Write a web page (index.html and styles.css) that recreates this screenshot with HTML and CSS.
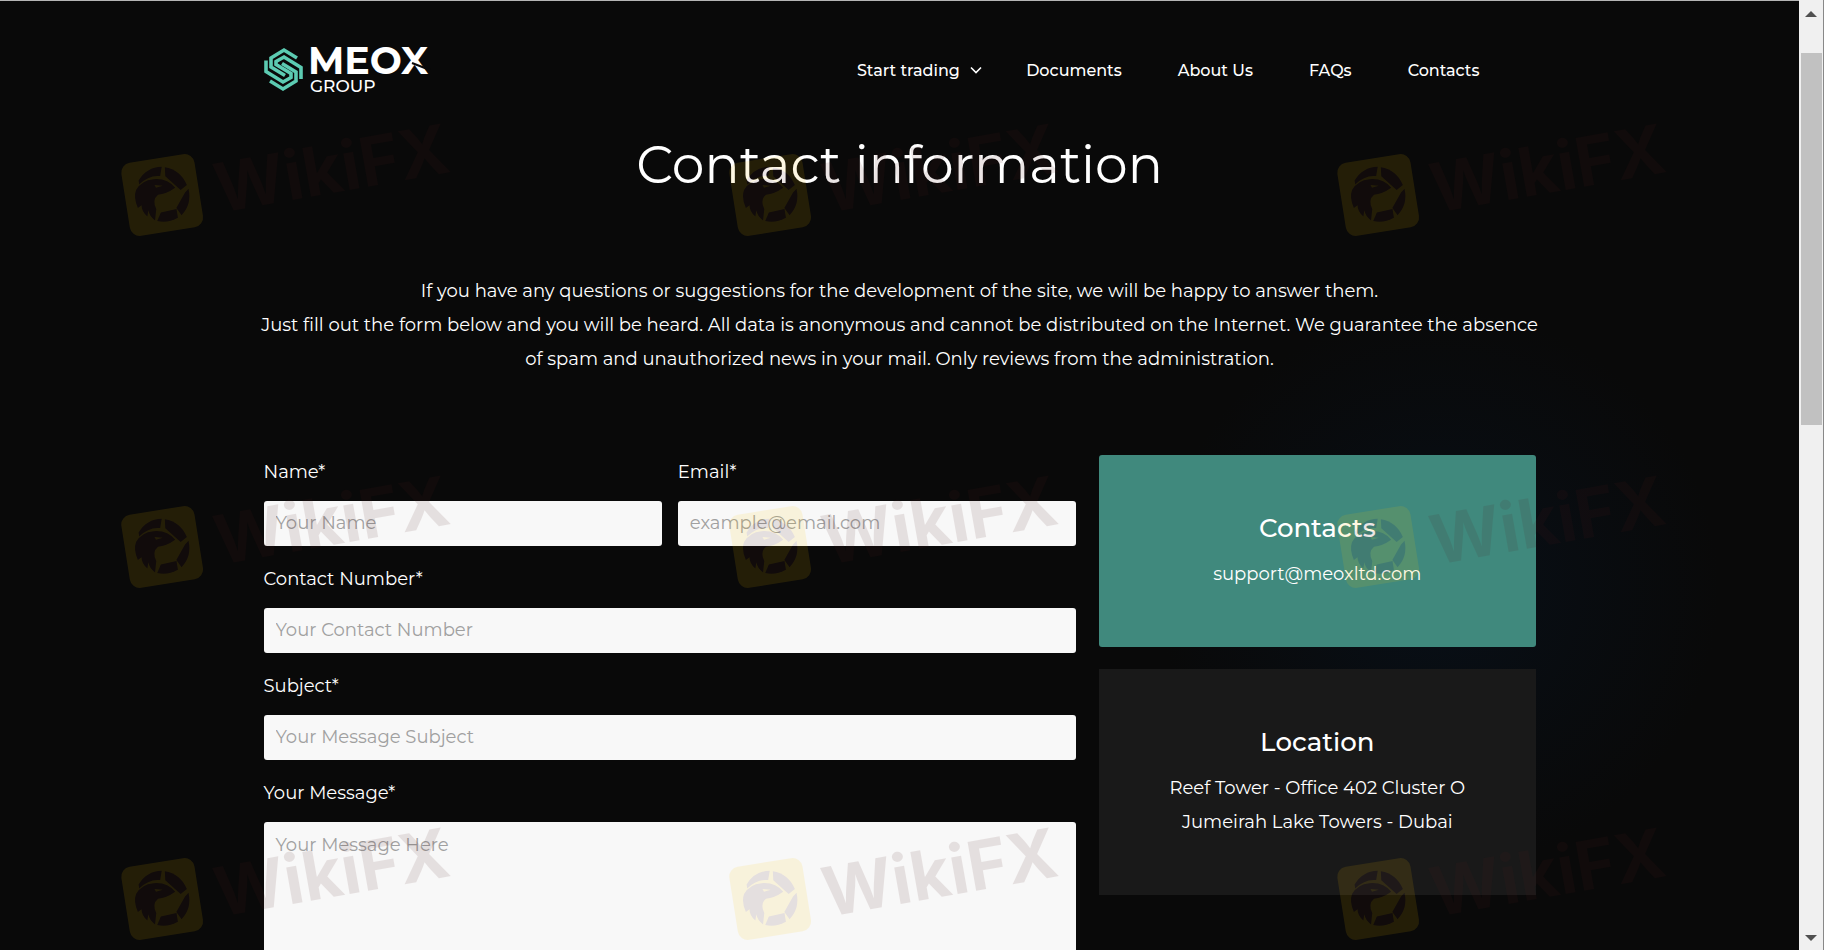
FILE: index.html
```html
<!DOCTYPE html>
<html lang="en">
<head>
  <meta charset="UTF-8" />
  <meta name="viewport" content="width=device-width, initial-scale=1" />
  <title>Contact information - MEOX Group</title>
  <link rel="stylesheet" href="styles.css">
</head>
<body>

  <div class="page">
    <div class="container">
      <header class="header">
        <a href="#" class="logo" aria-label="MEOX Group">
          <svg width="168" height="48" viewBox="0 0 168 48">
            <g fill="none" stroke="#5ccbb2" stroke-width="3.6">
              <path d="M2 14.5 V25.5 L19 36 L27 31.5 V27.5 L12 18.5 V15.5 L20 11 L37 21.5 V33" />
              <path d="M33 12 L20 4 L7 12 V21 L21 29.5" />
              <path d="M6 35 L19 43 L32 35 V26 L18 17.5" />
            </g>
            <text class="logo-name" x="44" y="28">MEOX</text>
            <text class="logo-sub" x="46" y="46">GROUP</text>
            <path d="M148 17 L166 24" stroke="#090909" stroke-width="2" />
          </svg>
        </a>
        <nav class="nav">
          <a href="#">Start trading
            <svg class="chevron" width="12" height="8" viewBox="0 0 12 8"><path d="M1 1.5 L6 6.5 L11 1.5" fill="none" stroke="#fff" stroke-width="1.6" /></svg>
          </a>
          <a href="#">Documents</a>
          <a href="#">About Us</a>
          <a href="#">FAQs</a>
          <a href="#">Contacts</a>
        </nav>
      </header>

      <h1>Contact information</h1>

      <p class="intro">
        If you have any questions or suggestions for the development of the site, we will be happy to answer them.<br />
        Just fill out the form below and you will be heard. All data is anonymous and cannot be distributed on the Internet. We guarantee the absence<br />
        of spam and unauthorized news in your mail. Only reviews from the administration.
      </p>

      <div class="columns">
        <form class="contact-form">
          <div class="row">
            <div class="field">
              <label for="name">Name*</label>
              <input type="text" id="name" placeholder="Your Name" required />
            </div>
            <div class="field">
              <label for="email">Email*</label>
              <input type="email" id="email" placeholder="example@email.com" required />
            </div>
          </div>
          <div class="field">
            <label for="phone">Contact Number*</label>
            <input type="tel" id="phone" placeholder="Your Contact Number" required />
          </div>
          <div class="field">
            <label for="subject">Subject*</label>
            <input type="text" id="subject" placeholder="Your Message Subject" required />
          </div>
          <div class="field">
            <label for="message">Your Message*</label>
            <textarea id="message" placeholder="Your Message Here" required></textarea>
          </div>
        </form>

        <aside class="cards">
          <div class="card card-contacts">
            <h2>Contacts</h2>
            <p><a href="mailto:support@meoxltd.com">support@meoxltd.com</a></p>
          </div>
          <div class="card card-location">
            <h2>Location</h2>
            <p>Reef Tower - Office 402 Cluster O<br />Jumeirah Lake Towers - Dubai</p>
          </div>
        </aside>
      </div>
    </div>

    <!-- Watermark tiles -->
    <svg class="defs" width="0" height="0">
      <symbol id="mark" viewBox="0 0 340 124" overflow="visible">
        <g transform="rotate(-9 42 74)">
          <rect x="5" y="38" width="74" height="74" rx="10" fill="#ffc800" />
          <g fill="#501c1c">
            <path d="M21 57 Q31 45 46 47 L43 56 Q32 53 21 61 Z" />
            <path d="M49 48 Q64 53 68 69 L61 73 L48 57 Z" />
            <path d="M69 73 Q70 89 58 98 L54 90 L65 76 Z" />
            <path d="M54 100 Q43 104 33 100 L38 92 L54 91 Z" />
            <path d="M17 66 Q24 57 36 58 Q50 59 56 70 Q46 75 38 74 Q31 78 34 88 L31 99 Q26 94 26 88 L24 94 Q19 88 20 82 L16 84 Q13 73 17 66 Z" />
            <path d="M36 64 L44 66 L37 67 Z" fill="#ffc800" />
          </g>
        </g>
        <text class="mark-text" x="99" y="93" transform="rotate(-10 99 93)">WikiFX</text>
      </symbol>
    </svg>
    <div class="watermarks" aria-hidden="true">
      <svg><use href="#mark" /></svg>
      <svg><use href="#mark" /></svg>
      <svg><use href="#mark" /></svg>
      <svg><use href="#mark" /></svg>
      <svg><use href="#mark" /></svg>
      <svg><use href="#mark" /></svg>
      <svg><use href="#mark" /></svg>
      <svg><use href="#mark" /></svg>
      <svg><use href="#mark" /></svg>
    </div>
  </div>

  <div class="scrollbar" aria-hidden="true">
    <svg width="12" height="6" viewBox="0 0 12 6"><path d="M0 6 L6 0 L12 6 Z" fill="#505050" /></svg>
    <div class="track"><div class="thumb"></div></div>
    <svg width="12" height="6" viewBox="0 0 12 6"><path d="M0 0 L6 6 L12 0 Z" fill="#505050" /></svg>
  </div>

</body>
</html>
```
FILE: styles.css
```css
* {
  box-sizing: border-box;
}
body {
  margin: 0;
  display: flex;
  height: 100vh;
  overflow: hidden;
  background: #090909;
  color: #fff;
  font-family: Montserrat, Inter, sans-serif;
  font-size: 18px;
  line-height: 34px;
}
a {
  color: inherit;
  text-decoration: none;
}
.page {
  position: relative;
  flex: 1;
  overflow: hidden;
  border-top: 1px solid #b5b5b5;
  background: radial-gradient(circle at 80% 62%, #080f17 0, #090909 280px);
}
.container {
  max-width: 1320px;
  margin: 0 auto;
  padding: 0 24px;
}

/* Header */
.header {
  display: flex;
  align-items: center;
  justify-content: space-between;
  height: 138px;
}
.logo svg {
  display: block;
  overflow: visible;
}
.logo-name {
  font-size: 38px;
  font-weight: 700;
  fill: #fff;
}
.logo-sub {
  font-size: 17px;
  font-weight: 500;
  fill: #fff;
}
.nav {
  display: flex;
  gap: 56px;
  margin-right: 56px;
  padding-top: 2px;
  font-size: 16px;
  font-weight: 500;
}
.chevron {
  margin-left: 6px;
  margin-right: -12px;
  vertical-align: 2px;
}

h1 {
  margin: 0 0 84px;
  font-size: 52px;
  font-weight: 400;
  line-height: 51px;
  text-align: center;
}
.intro {
  margin: 0 -24px 79px;
  text-align: center;
}

/* Form and cards */
.columns {
  display: grid;
  grid-template-columns: 812fr 436fr;
  gap: 23px;
  align-items: start;
}
.contact-form {
  display: flex;
  flex-direction: column;
  gap: 16px;
}
.row {
  display: grid;
  grid-template-columns: 1fr 1fr;
  gap: 16px;
}
.field {
  display: flex;
  flex-direction: column;
  gap: 12px;
}
input,
textarea {
  width: 100%;
  height: 45px;
  padding: 0 12px 2px;
  border: 0;
  border-radius: 3px;
  background: #f8f8f8;
  color: #222;
  font-family: inherit;
  font-size: 18px;
}
textarea {
  height: 200px;
  padding: 12px;
  line-height: 22px;
  resize: none;
}
::placeholder {
  color: #a0a0a0;
}
.cards {
  display: flex;
  flex-direction: column;
  gap: 22px;
}
.card {
  padding: 56px 24px;
  border-radius: 3px;
  text-align: center;
}
.card h2 {
  margin: 0 0 12px;
  font-size: 26px;
  font-weight: 500;
  line-height: 34px;
}
.card p {
  margin: 0;
}
.card-contacts {
  background: #40897d;
}
.card-location {
  border-radius: 0;
  background: #191919;
}

/* Watermark, lies over the whole page */
.watermarks {
  position: absolute;
  inset: 0;
  display: grid;
  grid-template-columns: repeat(3, 608px);
  grid-auto-rows: 352px;
  padding: 119px 0 0 120px;
  opacity: 0.11;
  pointer-events: none;
}
.watermarks svg {
  width: 340px;
  height: 124px;
  overflow: visible;
}
.defs {
  position: absolute;
}
.mark-text {
  font-family: Inter, sans-serif;
  font-size: 68px;
  font-weight: 700;
  fill: #501c1c;
}

/* Scrollbar */
.scrollbar {
  display: flex;
  flex-direction: column;
  align-items: center;
  gap: 36px;
  width: 25px;
  padding: 11px 0 9px;
  border-right: 1px solid #888;
  background: #f0f0f0;
}
.track {
  flex: 1;
  width: 21px;
}
.thumb {
  height: 44%;
  background: #c1c1c1;
}
```
